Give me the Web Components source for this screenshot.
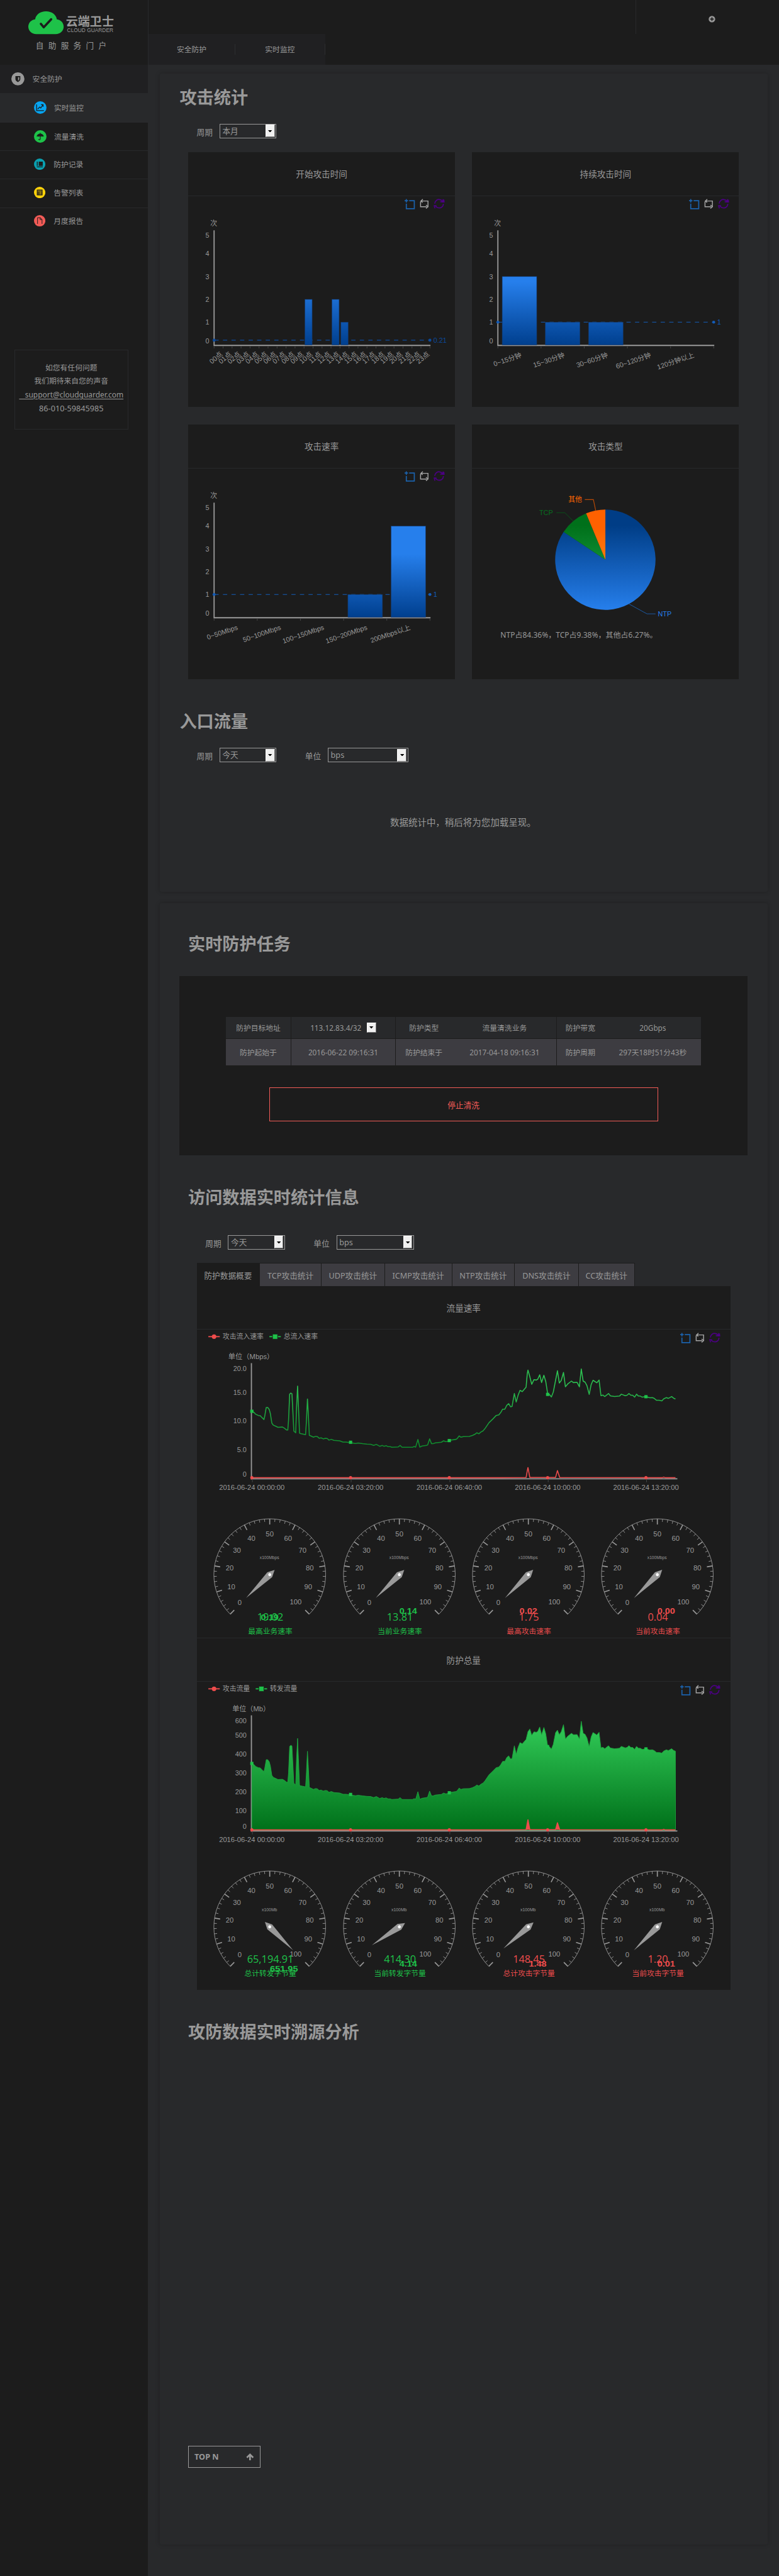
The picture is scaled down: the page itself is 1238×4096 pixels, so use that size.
<!DOCTYPE html>
<html lang="zh-CN">
<head>
<meta charset="utf-8">
<title>云端卫士 自助服务门户</title>
<style>
html{background:#28292b;width:1238px;height:4096px;overflow:hidden}
body{margin:0;width:1238px;height:4096px;overflow:hidden;background:#28292b;color:#999;
font-family:"Noto Sans","Noto Sans CJK SC",sans-serif;font-size:13px}
portal-app{zoom:.9062}
</style>
</head>
<body>
<portal-app></portal-app>
<script>
const esc = s => String(s).replace(/&/g, '&amp;').replace(/</g, '&lt;');
const FONT = "'Liberation Sans','Noto Sans CJK SC',sans-serif";
/* SVG text centred vertically on y */
function T(x, y, s, o = {}) {
  const z = o.size || 12;
  return `<text x="${x}" y="${y + z * .36}" font-size="${z}" fill="${o.fill || '#999'}" text-anchor="${o.anchor || 'middle'}"` +
    (o.bold ? ' font-weight="700"' : '') + (o.len ? ` textLength="${o.len}" lengthAdjust="spacingAndGlyphs"` : '') +
    (o.rot ? ` transform="rotate(${o.rot} ${x} ${y})"` : '') + ` font-family="${o.font || FONT}">${esc(s)}</text>`;
}
const YH = "'Noto Sans','Noto Sans CJK SC',sans-serif";
class Base extends HTMLElement {
  connectedCallback() {
    if (this.shadowRoot) return;
    this.attachShadow({ mode: 'open' }).innerHTML = '<style>*{box-sizing:border-box}svg{display:block}' + this.css() + '</style>' + this.html();
  }
  css() { return ':host{display:block}'; }
  html() { return '<slot></slot>'; }
  a(n, d = '') { return this.getAttribute(n) ?? d; }
}
const def = (n, c) => customElements.define(n, c);

def('brand-logo', class extends Base {
  css() { return ':host{display:flex;flex-direction:column;height:114px;padding:20px 0 0 50px;box-sizing:border-box}'; }
  html() {
    return `<svg width="156" height="72" viewBox="0 0 156 72">
    <path fill="#1ec249" d="M14 40C6 40 0 34 0 27c0-7 5-12 12-13C13 6 21 0 31 0s18 6 19 14c7 1 12 6 12 13 0 7-6 13-14 13z"/>
    <path d="M22 22l5 6 13-14" fill="none" stroke="#1c1c1c" stroke-width="4" stroke-linecap="round" stroke-linejoin="round"/>
    ${T(66, 18, '云端卫士', { size: 21, bold: 1, anchor: 'start', len: 84, font: YH })}
    ${T(68, 33.5, 'CLOUD GUARDER', { size: 9, anchor: 'start', len: 81 })}
    ${[...'自助服务门户'].map((c, i) => T(20 + i * 22, 60, c, { size: 14, font: YH })).join('')}</svg>`;
  }
});

const ICONS = {
  shield: ['#999', '<path d="M7.500 7h9v5.500c0 2.500-2 4-4.500 5.500-2.500-1.500-4.500-3-4.500-5.500z"/><path d="M12.300 9v6.500c1.500-1 2.200-1.800 2.200-3V9z" fill="#999"/>'],
  chart: ['#06a5f2', '<path d="M5 6v12h14M7 15l4-4 2 2 4-6m-3.500-.5h4v4" fill="none" stroke="#1c1c1c" stroke-width="1.500"/>'],
  umbrella: ['#1ec249', '<path d="M5 12.500c.5-4 3.500-6 7-6s6.500 2 7 6q-1.700-1.600-3.300 0-1.900-1.600-3.700 0-1.800-1.600-3.700 0-1.600-1.600-3.300 0z"/><path d="M12 5v12c0 2-3 2-3 0" fill="none" stroke="#1c1c1c" stroke-width="1.400"/>'],
  book: ['#0aa0b0', '<path d="M10 6.500h8.500v9H10zM6 6.500h1.800v9H6zM6 17h12.500v1.500H6z"/>'],
  list: ['#ffd20a', '<path d="M6 6h12v12H6z"/><path d="M7.500 9h9M8 12h1.500m1.500 0h5M8 15h1.500m1.500 0h5" fill="none" stroke="#ffd20a" stroke-width="1.300"/>'],
  file: ['#f25b57', '<path d="M7.500 18.500v-13h6l3.500 4v9M13 5.500v4h4" fill="none" stroke="#1c1c1c" stroke-width="1.300"/>']
};
def('nav-item', class extends Base {
  css() {
    const sub = this.hasAttribute('sub');
    return `:host{display:flex;align-items:center;height:${this.a('h', 50)}px;padding:0 0 ${this.a('up', 0)}px ${sub ? 60 : 20}px;background:${this.a('bg', 'transparent')};
    border-bottom:${this.hasAttribute('line') ? 1 : 0}px solid #28292b;box-sizing:border-box;font-size:13px}
    span{padding-left:${sub ? 13 + (22 - this.a('d', 22)) / 2 : 14}px;line-height:20px}`;
  }
  html() {
    const [c, g] = ICONS[this.a('icon')], d = this.a('d', 22);
    return `<svg width="${d}" height="${d}" viewBox="0 0 24 24"><circle cx="12" cy="12" r="12" fill="${c}"/><g fill="#1c1c1c">${g}</g></svg><span><slot></slot></span>`;
  }
});
def('contact-box', class extends Base {
  css() {
    return `:host{display:flex;flex-direction:column;align-items:center;width:200px;height:140px;margin:199px 0 0 25px;border:1px solid #28292b;box-sizing:border-box;
    padding-top:18px;font-size:13px}div{height:24px;line-height:24px;white-space:pre}.l{font-size:13.200px}u{text-underline-offset:2px}`;
  }
  html() { return '<div>如您有任何问题</div><div>我们期待来自您的声音</div><div class="l"><u>   support@cloudguarder.com</u></div><div class="l" style="font-size:14px">86-010-59845985</div>'; }
});
def('side-bar', class extends Base {
  css() { return ':host{display:block;width:260px;height:4521px;background:#1c1c1c;border-right:1px solid #28292b;box-sizing:border-box;flex:none}'; }
  html() {
    return `<brand-logo></brand-logo>
    <nav-item icon="shield" h="49" d="23" bg="#202022">安全防护</nav-item>
    <nav-item sub icon="chart" h="52" bg="#28292b">实时监控</nav-item>
    <nav-item sub line icon="umbrella">流量清洗</nav-item>
    <nav-item sub line icon="book" d="20" up="3">防护记录</nav-item>
    <nav-item sub line icon="list" d="20" up="3">告警列表</nav-item>
    <nav-item sub icon="file" d="20" up="4">月度报告</nav-item>
    <contact-box></contact-box>`;
  }
});
def('top-bar', class extends Base {
  css() {
    return `:host{display:flex;flex-direction:column;height:114px;background:#1c1c1c}
    .t{display:flex;justify-content:flex-end;height:60px}.u{width:251px;border-left:1px solid #28292b;padding:28px 0 0 127px}
    .c{display:flex;align-items:center;width:310px;height:54px;background:#202022;line-height:20px}
    .c span{width:153px;height:19px;line-height:19px;text-align:center;border-right:1px solid #2d2e30}.c span+span{width:157px}`;
  }
  html() {
    return `<div class="t"><div class="u"><svg width="12" height="12" viewBox="0 0 12 12"><circle cx="6" cy="6" r="5.700" fill="#999"/><path d="M6 2.800v6.400M2.800 6h6.400" stroke="#1c1c1c" stroke-width="1.800"/></svg></div></div>
    <div class="c"><span>安全防护</span><span>实时监控</span></div>`;
  }
});
def('content-panel', class extends Base {
  css() { return `:host{display:flow-root;width:1066px;margin:${this.a('mt')}px 0 0 20px;height:${this.a('h')}px;box-sizing:border-box;background:#28292b;box-shadow:0 0 8px rgba(0,0,0,.22);border-radius:3px}`; }
});
def('section-title', class extends Base {
  css() { return `:host{display:block;margin:${this.a('mt')}px 0 0 ${this.a('ml', 50)}px;height:40px;line-height:40px;font-size:30px;font-weight:700;white-space:nowrap}`; }
});
def('select-box', class extends Base {
  css() {
    return `:host{display:flex;gap:12px;align-items:center;height:26px;font-size:14px}
    label{width:28px;line-height:20px;padding-top:3px}
    .s{display:flex;justify-content:space-between;align-items:center;width:${this.a('w', 100)}px;height:26px;border:1px solid #999;padding:0 2px 0 4px;line-height:20px}
    .b{width:16px;height:22px;background:#f0f0f0;border:1px solid;border-color:#fff #777 #777 #fff;display:flex;align-items:center;justify-content:center}`;
  }
  html() { return `<label>${this.a('label')}</label><div class="s"><slot></slot><div class="b"><svg width="7" height="4"><path d="M0 0h7l-3.500 4z" fill="#000"/></svg></div></div>`; }
});
def('filter-row', class extends Base {
  css() { return `:host{display:flex;gap:50px;margin:${this.a('mt')}px 0 0 ${this.a('ml', 65)}px;height:26px}`; }
});

/* region zoom, zoom back, refresh */
def('chart-tools', class extends Base {
  css() { return ':host{display:block;width:72px;height:20px}'; }
  html() {
    return `<svg width="72" height="20" viewBox="0 0 72 20" fill="none">
    <path d="M0 3.500h6M3 .5v6M8 3.500h9v14H3V8.500" stroke="#1b62ac" stroke-width="1.900"/>
    <path d="M29 4h12v9.500M38.500 14H28V5M32 .8L28.600 4l3 2.700M37.500 11l3.500 3-3.500 3" stroke="#a5a5a5" stroke-width="1.600"/>
    <path d="M52.800 8.500C53.300 3 58 .8 61.500 1.500c3 .5 4.500 2 5.500 4M68.200 9c-.5 5.500-5 7.700-8.700 7-3-.5-4.500-2-5.500-4M67.500.8v4.700h-5M68.800 1.500l.4 4.300h-4M51 12.300h5M52 12.300l1.200 4.700" stroke="#4b0082" stroke-width="1.900"/></svg>`;
  }
});
def('chart-card', class extends Base {
  css() {
    return `:host{display:block;background:#1c1c1c;width:468px;height:447px}
    header{height:77px;line-height:77px;text-align:center;font-size:15px;border-bottom:1px solid #28292b}`;
  }
  html() { return `<header>${this.a('title')}</header><slot></slot>`; }
});
class PlotArea extends Base {
  css() { return `:host{display:grid}svg,chart-tools{grid-area:1/1}chart-tools{justify-self:end;margin:5px 16px 0 0}`; }
  html() { return this.draw() + '<chart-tools></chart-tools>'; }
}
def('bar-chart', class extends PlotArea {
  draw() {
    const L = this.a('labels').split(','), V = this.a('values').split(',').map(Number), n = L.length, w = 378.6 / n;
    const avg = +this.a('avg'), ay = 261 - 40 * avg, rot = -this.a('rotate'), ac = this.a('avgcolor', '#135cb8');
    let s = `<svg width="468" height="369" viewBox="0 0 468 369"><defs><linearGradient id="g" gradientUnits="userSpaceOnUse" x1="0" y1="150" x2="0" y2="261"><stop offset="0" stop-color="#267fec"/><stop offset="1" stop-color="#003f8e"/></linearGradient></defs>`;
    s += T(45, 48, '次') + [69, 101, 141, 181, 221, 254].map((y, i) => T(37, y, 5 - i, { anchor: 'end' })).join('');
    s += `<path d="M45.500 60V262.500M44.500 261.800H425" stroke="#999" stroke-width="2"/>`;
    for (let i = 0; i <= n; i++) s += `<path d="M${45.5 + i * w} 263v4" stroke="#4a4a4a"/>`;
    s += `<path d="M46 ${ay}H424" stroke="${ac}" stroke-width="1.300" stroke-dasharray="7.500 7.500"/>`;
    V.forEach((v, i) => { if (v) s += `<rect x="${45.5 + i * w + w * .1}" y="${261 - 40 * v}" width="${w * .8}" height="${40 * v}" fill="url(#g)" stroke="#173a6c" stroke-width=".7"/>`; });
    s += `<circle cx="45.500" cy="${ay}" r="2.600" fill="${ac}"/><circle cx="424" cy="${ay}" r="2.600" fill="${ac}"/>` + T(430, ay, this.a('avglabel', avg), { anchor: 'start', fill: ac });
    L.forEach((t, i) => { s += T(45.5 + (i + .5) * w + (rot < -30 ? 5 : 3), rot < -30 ? 275 : 278, t, { anchor: 'end', rot, size: 12 }); });
    return s + '</svg>';
  }
});
def('pie-chart', class extends Base {
  html() {
    const cx = 234, cy = 160, r = 88;
    const p = f => { const a = f * Math.PI * 2; return (cx + r * Math.sin(a)).toFixed(2) + ' ' + (cy - r * Math.cos(a)).toFixed(2); };
    const sl = (a, b, c) => `<path d="M${cx} ${cy}L${p(a)}A${r} ${r} 0 ${b - a > .5 ? 1 : 0} 1 ${p(b)}z" fill="${c}"/>`;
    const gr = (id, a, b, y1, y2) => `<linearGradient id="${id}" gradientUnits="userSpaceOnUse" x1="0" x2="0" y1="${y1}" y2="${y2}"><stop offset="0" stop-color="${a}"/><stop offset="1" stop-color="${b}"/></linearGradient>`;
    return `<svg width="468" height="369" viewBox="0 0 468 369"><defs>${gr('b', '#003d86', '#267fec', 100, 248)}${gr('t', '#00701a', '#0e8c32', 100, 160)}${gr('o', '#ff6100', '#ff7b0c', 105, 160)}</defs>
    ${sl(0, .8436, 'url(#b)')}${sl(.8436, .9373, 'url(#t)')}${sl(.9373, 1, 'url(#o)')}
    <g fill="none"><path d="M198 54.500h15l4 19" stroke="#b84a06" stroke-width="1.300"/><path d="M148 77.500h15l15 15" stroke="#07561a"/><path d="M276 238l31 17h15" stroke="#1c5fb0"/></g>
    ${T(169, 54.5, '其他', { anchor: 'start', fill: '#ff6600' })}${T(118, 77, 'TCP', { anchor: 'start', fill: '#07701f' })}${T(326, 255, 'NTP', { anchor: 'start', fill: '#267fec' })}
    ${T(50, 292, 'NTP占84.36%，TCP占9.38%，其他占6.27%。', { anchor: 'start', size: 13, font: YH, len: 275 })}</svg>`;
  }
});

const HEAD = '213,1126 219,1132 223,1140 230,1146 235,1147 238,1153 245,1165 247,1150 251,1108 255,1108 259,1118 262,1138 266,1183 270,1192 276,1197 282,1202 294,1201 299,1206 305,1215 308,1215 310,1170 313,1045 316,1040 319,1043 321,1110 324,1220 329,1228 331,1110 334,1007 336,1100 339,1230 342,1232 355,1237 357,1180 360,1068 362,1130 365,1240 369,1243 376,1249 381,1245 386,1246 391,1254 396,1252 402,1257 407,1254 412,1255 417,1263 423,1259 430,1264 445,1266 454,1272 462,1272 474,1275 487,1279 494,1277 506,1280 517,1282 527,1283 535,1288 542,1283 551,1292 558,1288 562,1292 568,1289 573,1294 579,1294 583,1297 600,1295 605,1288 610,1297 638,1297 642,1293 646,1296 652,1260 657,1296 663,1291 675,1288 678,1285 683,1257 688,1280 692,1280 698,1276 714,1273 720,1266 725,1270 730,1269 735,1264 753,1259 756,1255 761,1243 766,1249 772,1246 788,1245 796,1241 803,1235 808,1228 813,1233 819,1224 824,1219 829,1209 840,1180 850,1163 859,1146 866,1143 871,1132 876,1116 882,1116 887,1098 892,1090 897,1105 901,1103 907,1042 912,1082 917,1050 922,1027 928,1033 938,1012 ';
const MID = ' 959,976 965,978 969,974 974,953 979,990 985,955 990,985 995,1042 1000,1047 1005,1058 1010,1035 1016,980 ';
const TAIL = ' 1037,942 1042,1010 1048,997 1058,983 1063,990 1073,989 1079,1010 1084,926 1089,983 1094,988 1099,1005 1105,1046 1110,1000 1115,979 1125,991 1131,978 1136,1052 1141,1049 1146,1056 1156,1042 1161,1053 1172,1056 1185,1054 1190,1045 1200,1052 1205,1050 1210,1042 1215,1050 1220,1050 1225,1059 1230,1045 1235,1054 1240,1054 1245,1059 1255,1057 1265,1062 1272,1061 1277,1065 1283,1074 1290,1074 1297,1077 1302,1067 1309,1061 1314,1065 1323,1056 1328,1064 1333,1068';
const RATE = HEAD + '941,950 943,931 947,955 953,998' + MID + '1021,934 1026,992 1031,980' + TAIL;
const VOLUME = HEAD + '943,975 948,963 953,992' + MID + '1021,968 1026,990 1031,975' + TAIL;
const ATTACK = '213,1441 870,1441 938,1440 941,1410 943,1393 948,1440 1016,1440 1021,1407 1027,1440 1298,1441 1302,1438 1306,1441 1333,1441';
const X = x => x * .6633 - 45, Y = y => 260 - (1441 - y) * .37;
const pts = s => s.trim().split(/\s+/).map(p => { const [x, y] = p.split(','); return X(x).toFixed(1) + ' ' + Y(y).toFixed(1); }).join('L');
def('traffic-chart', class extends PlotArea {
  draw() {
    const area = this.hasAttribute('area'), N = this.a('series').split(','), ys = this.a('ys').split(',').map(Number), yl = this.a('yl').split(',');
    const leg = (x, c, sq, t) => `<path d="M${x} 12.500h20" stroke="${c}" stroke-width="2"/>` + (sq ? `<rect x="${x + 5.5}" y="8" width="9" height="9" rx="1" fill="${c}" stroke="#1c1c1c"/>` : `<circle cx="${x + 10}" cy="12.500" r="4" fill="${c}"/>`) + T(x + 25, 12.5, t, { anchor: 'start' });
    let s = `<svg width="936" height="300" viewBox="0 0 936 300"><defs><linearGradient id="g" gradientUnits="userSpaceOnUse" x1="0" x2="0" y1="90" y2="260"><stop offset="0" stop-color="#2dc352"/><stop offset="1" stop-color="#00701a"/></linearGradient></defs>`;
    s += leg(20, '#ee4c4c', 0, N[0]) + leg(20 + 35 + N[0].length * 12, '#1ec249', 1, N[1]);
    s += T(this.a('ux'), 47.8, this.a('unit'), { anchor: 'start', len: this.a('ul') });
    ys.forEach((y, i) => s += T(87, y, yl[i], { anchor: 'end' }));
    s += '<path d="M95.500 59V263" stroke="#999" stroke-width="2"/>';
    const d = pts(area ? VOLUME : RATE), r = pts(ATTACK);
    if (area) s += `<path d="M${X(213)} 261L${d}V261z" fill="url(#g)" stroke="#1ea53e" stroke-width="1"/>`;
    else s += `<path d="M${d}" fill="none" stroke="url(#g)" stroke-width="1.700" stroke-linejoin="round"/>`;
    s += '<path d="M94.500 262H842.500" stroke="#999" stroke-width="2"/>';
    s += `<path d="M${r}" fill="${area ? '#ee4c4c' : 'none'}" stroke="#ee4c4c" stroke-width="1.700" stroke-linejoin="round"/>`;
    [[213, 1126], [474, 1273], [735, 1265], [995, 1046], [1255, 1057]].forEach(([x, y], i) => {
      s += `<rect x="${X(x) - 2.8}" y="${Y(y) - 2.8}" width="5.600" height="5.600" fill="#1ec249"/><circle cx="${X(x)}" cy="260" r="2.800" fill="#ee4c4c"/><path d="M${X(x) + 1} 263v5" stroke="#4a4a4a"/>`;
      s += T(X(x), 276.7, '2016-06-24 ' + ['00:00:00', '03:20:00', '06:40:00', '10:00:00', '13:20:00'][i], { len: 115 });
    });
    return s + '</svg>';
  }
});
def('gauge-dial', class extends Base {
  html() {
    const cx = 113.3, cy = 130, R = 98, c = this.a('color'), P = (r, v) => { const a = (225 - 2.7 * v) * Math.PI / 180; return [(cx + r * Math.cos(a)).toFixed(2), (cy - r * Math.sin(a)).toFixed(2)]; };
    let s = `<svg width="226.600" height="240" viewBox="0 0 226.600 240"><g stroke="#999" fill="none"><path d="M${P(R, 0).join(' ')}A${R} ${R} 0 1 1 ${P(R, 100).join(' ')}"/>`;
    for (let v = 0; v <= 100; v += 2) s += `<path d="M${P(R, v).join(' ')}L${P(v % 10 ? R - 5 : R - 10, v).join(' ')}" stroke-width="${v % 10 ? 1 : 1.8}"/>`;
    s += '</g>';
    for (let v = 0; v <= 100; v += 10) { const p = P(v == 100 ? 68 : 71, v).map(Number); s += T(p[0] - (v % 100 ? 0 : 2.5), p[1] - (v == 0 ? 2 : 1), v, { size: 12.5 }); }
    s += T(cx - .5, 100, this.a('unit'), { size: 8, len: this.a('ul') });
    const ang = -45 + Math.min(+this.a('angle'), 270);
    s += `<g transform="translate(${cx} ${cy}) rotate(${ang})"><path d="M-58 0L0 -6L12 0L0 6z" fill="#999"/><circle r="2.600" fill="#fff"/></g>`;
    const ny = +this.a('ny');
    s += T(cx + 1, ny, this.a('value'), { size: 18, fill: c, font: "'Open Sans','Noto Sans',sans-serif" });
    s += T(cx + +this.a('bx'), +this.a('by'), this.a('sub'), { size: 15, bold: 1, anchor: 'start', fill: c, len: this.a('bl', 31) });
    s += T(cx + 1, ny + 25.5, this.a('label'), { size: 13, fill: c, font: YH });
    return s + '</svg>';
  }
});
def('gauge-row', class extends Base { css() { return ':host{display:flex;height:240px;padding-left:15px;box-sizing:border-box}'; } });

def('task-box', class extends Base {
  css() {
    return `:host{display:flex;flex-direction:column;align-items:center;width:996px;height:314px;margin:36px 0 0 35px;background:#1c1c1c;padding-top:71px;box-sizing:border-box}
    .g{display:grid;grid-template-columns:114px 182px 99px 182px 82px 170px;grid-template-rows:38px 46px;gap:1px;width:834px}
    .g div{display:flex;align-items:center;justify-content:center;gap:10px;background:#28292b;font-size:13px;white-space:nowrap}.g div:nth-child(n+7){background:#3d3c41}
    i{width:16px;height:18px;background:#f0f0f0;border:1px solid;border-color:#fff #777 #777 #fff;display:flex;align-items:center;justify-content:center}
    button{width:682px;height:60px;margin-top:39px;background:none;border:1px solid #f25b57;color:#f25b57;font:14px ${YH}}`;
  }
  html() {
    return `<div class="g"><div>防护目标地址</div><div>113.12.83.4/32<i><svg width="7" height="4"><path d="M0 0h7l-3.500 4z"/></svg></i></div><div>防护类型</div><div>流量清洗业务</div><div>防护带宽</div><div>20Gbps</div>
    <div>防护起始于</div><div>2016-06-22 09:16:31</div><div>防护结束于</div><div>2017-04-18 09:16:31</div><div>防护周期</div><div>297天18时51分43秒</div></div><button>停止清洗</button>`;
  }
});
def('tab-strip', class extends Base {
  css() {
    return `:host{display:flex;height:41px;margin:22.500px 0 0 65px}
    span{display:flex;align-items:center;justify-content:center;font-size:14px;background:#3d3c41;border:2px solid #1c1c1c;border-width:2px 2px 0 0;box-sizing:border-box;white-space:nowrap;padding-top:2px}
    span:first-of-type{background:#1c1c1c}`;
  }
  html() {
    return [['防护数据概要', 111], ['TCP攻击统计', 108], ['UDP攻击统计', 111], ['ICMP攻击统计', 118], ['NTP攻击统计', 110], ['DNS攻击统计', 112], ['CC攻击统计', 98]]
      .map(([t, w]) => `<span style="width:${w}px">${t}</span>`).join('');
  }
});
def('data-panel', class extends Base {
  css() { return `:host{display:block;width:936px;height:1235px;margin-left:65px;background:#1c1c1c}header{height:77px;line-height:77px;text-align:center;font-size:15px;border-bottom:1px solid #28292b}header.m{height:78px;border-top:1px solid #28292b}`; }
  html() {
    const G = '#1ec249', R = '#ee4c4c';
    const g = (color, value, sub, label, bx, by, ny, unit, ul, angle, bl) => `<gauge-dial color="${color}" value="${value}" sub="${sub}" label="${label}" bx="${bx}" by="${by}" ny="${ny}" unit="${unit}" ul="${ul}" angle="${angle}" bl="${bl || 31}"></gauge-dial>`;
    return `<header>流量速率</header>
    <traffic-chart series="攻击流入速率,总流入速率" unit="单位（Mbps）" ux="55" ul="80" ys="68.500,110.600,160.500,210.500,253.700" yl="20.0,15.0,10.0,5.0,0"></traffic-chart>
    <gauge-row>${g(G, '19.02', '0.19', '最高业务速率', -15.5, 204, 204, 'x100Mbps', 34, .5)}${g(G, '13.81', '0.14', '当前业务速率', 0, 193.7, 204, 'x100Mbps', 34, .4)}${g(R, '1.75', '0.02', '最高攻击速率', -15.5, 193.7, 204, 'x100Mbps', 34, 0)}${g(R, '0.04', '0.00', '当前攻击速率', 0, 193.7, 204, 'x100Mbps', 34, 0)}</gauge-row>
    <header class="m">防护总量</header>
    <traffic-chart area series="攻击流量,转发流量" unit="单位（Mb）" ux="62" ul="66" ys="68.500,93.500,126.600,160.500,193.500,226.600,253.400" yl="600,500,400,300,200,100,0"></traffic-chart>
    <gauge-row>${g(G, '65,194.91', '651.95', '总计转发字节量', .5, 203, 186.5, 'x100Mb', 27, 270, 49)}${g(G, '414.30', '4.14', '当前转发字节量', 0, 194, 186.5, 'x100Mb', 27, 11.2)}${g(R, '148.45', '1.48', '总计攻击字节量', 1, 194, 186.5, 'x100Mb', 27, 4)}${g(R, '1.20', '0.01', '当前攻击字节量', 0, 194, 186.5, 'x100Mb', 27, 0)}</gauge-row>`;
  }
});
def('top-button', class extends Base {
  css() { return ':host{display:flex;align-items:center;justify-content:space-between;width:127px;height:39px;margin:706px 0 0 50px;border:1px solid #999;padding:0 10px;box-sizing:border-box;font-size:14px;font-weight:700}'; }
  html() { return '<slot></slot><svg width="14" height="13" viewBox="0 0 14 13"><path d="M7 13V3M1.500 7.500L7 2l5.500 5.500" fill="none" stroke="#999" stroke-width="2.900"/></svg>'; }
});
def('portal-app', class extends Base {
  css() {
    return `:host{display:flex;width:1366px;height:4521px;overflow:hidden}main{flex:1;min-width:0}
    .cards{display:grid;grid-template-columns:468px 468px;gap:31px 30px;margin:24px 0 0 50px}
    .msg{margin-top:86px;height:40px;line-height:40px;text-align:center;font-size:16px;padding-right:2px}`;
  }
  html() {
    const hrs = Array.from({ length: 24 }, (_, i) => String(i).padStart(2, '0') + '点').join();
    const hv = Array.from({ length: 24 }, (_, i) => ({ 10: 2, 13: 2, 14: 1 })[i] || 0).join();
    return `<side-bar></side-bar><main><top-bar></top-bar>
    <content-panel mt="15" h="1436">
      <section-title mt="22" ml="35">攻击统计</section-title>
      <filter-row mt="26"><select-box label="周期">本月</select-box></filter-row>
      <div class="cards">
        <chart-card title="开始攻击时间"><bar-chart labels="${hrs}" values="${hv}" avg="0.21" avgcolor="#0b4a9c" rotate="40"></bar-chart></chart-card>
        <chart-card title="持续攻击时间"><bar-chart labels="0~15分钟,15~30分钟,30~60分钟,60~120分钟,120分钟以上" values="3,1,1,0,0" avg="1" rotate="19"></bar-chart></chart-card>
        <chart-card title="攻击速率"><bar-chart labels="0~50Mbps,50~100Mbps,100~150Mbps,150~200Mbps,200Mbps以上" values="0,0,0,1,4" avg="1" rotate="19"></bar-chart></chart-card>
        <chart-card title="攻击类型"><pie-chart></pie-chart></chart-card>
      </div>
      <section-title mt="54.500" ml="35">入口流量</section-title>
      <filter-row mt="25.500"><select-box label="周期">今天</select-box><select-box label="单位" w="141">bps</select-box></filter-row>
      <div class="msg">数据统计中，稍后将为您加载呈现。</div>
    </content-panel>
    <content-panel mt="20" h="2880">
      <section-title mt="52">实时防护任务</section-title>
      <task-box></task-box>
      <section-title mt="54.500">访问数据实时统计信息</section-title>
      <filter-row mt="45.500" ml="80"><select-box label="周期">今天</select-box><select-box label="单位" w="136">bps</select-box></filter-row>
      <tab-strip></tab-strip>
      <data-panel></data-panel>
      <section-title mt="54">攻防数据实时溯源分析</section-title>
      <top-button>TOP N</top-button>
    </content-panel></main>`;
  }
});
</script>
</body>
</html>
